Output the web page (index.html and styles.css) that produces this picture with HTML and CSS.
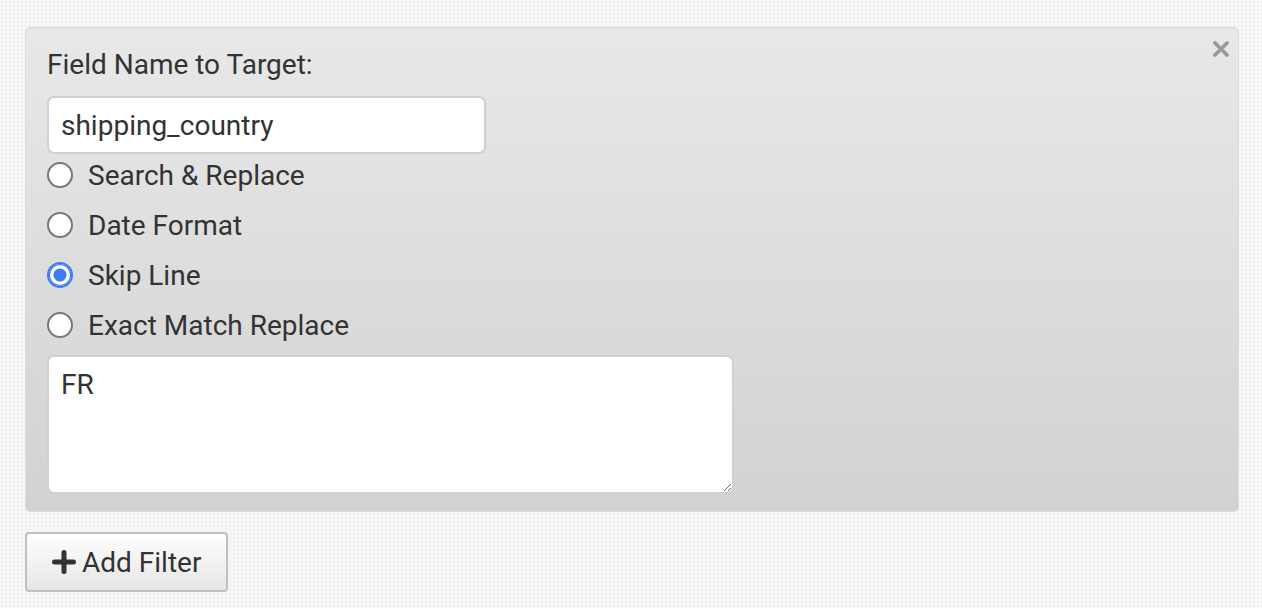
FILE: index.html
```html
<!DOCTYPE html>
<html lang="en">
<head>
<meta charset="UTF-8">
<meta name="viewport" content="width=device-width, initial-scale=1.0">
<title>Filters</title>
<link rel="stylesheet" href="styles.css">
</head>
<body>

<div class="page">

  <!-- one filter -->
  <div class="filter">
    <a class="close" href="#" title="Remove">
      <svg width="16" height="16" viewBox="0 0 16 16"><path d="M2 2 L14 14 M14 2 L2 14" stroke="#9a9a9a" stroke-width="3.8" stroke-linecap="round"/></svg>
    </a>

    <label class="field-label" for="field">Field Name to Target:</label>
    <input class="field-input" id="field" type="text" value="shipping_country">

    <label class="option"><input type="radio" name="mode"> Search &amp; Replace</label>
    <label class="option"><input type="radio" name="mode"> Date Format</label>
    <label class="option"><input type="radio" name="mode" checked> Skip Line</label>
    <label class="option"><input type="radio" name="mode"> Exact Match Replace</label>

    <textarea class="field-text">FR</textarea>
  </div>

  <button class="add-btn" type="button">
    <svg width="24" height="24" viewBox="0 0 24 24"><path d="M12 2.5 V21.5 M2.5 12 H21.5" stroke="#333" stroke-width="5" stroke-linecap="round"/></svg>
    Add Filter
  </button>

</div>

</body>
</html>
```

FILE: styles.css
```css
body {
  margin: 0;
  background-color: #f7f7f7;
  background-image: radial-gradient(#eeeeee 1px, transparent 1px);
  background-size: 4px 4px;
  font-family: Roboto, "Liberation Sans", sans-serif;
  color: #333;
}

.page {
  padding: 27px 23px 0 25px;
}

.filter {
  position: relative;
  display: flex;
  flex-direction: column;
  align-items: flex-start;
  padding: 19px 22px 17px 21px;
  border: 1px solid #dadada;
  border-radius: 5px;
  background: linear-gradient(#e8e8e8, #d2d2d2);
}

.close {
  position: absolute;
  top: 13px;
  right: 9px;
  line-height: 0;
}

.field-label {
  font-size: 28px;
  line-height: 36px;
  margin-bottom: 13px;
}

.field-input {
  box-sizing: border-box;
  width: 439px;
  height: 58px;
  padding: 0 12px;
  border: 2px solid #d0d0d0;
  border-radius: 7px;
  background: #fff;
  font-family: inherit;
  font-size: 28px;
  color: #333;
  outline: none;
}

.option {
  display: flex;
  align-items: center;
  gap: 15px;
  height: 42px;
  margin-top: 8px;
  font-size: 28px;
}

.field-input + .option {
  margin-top: 0;
}

.option input {
  appearance: none;
  margin: 0;
  width: 26px;
  height: 26px;
  border: 2px solid #777;
  border-radius: 50%;
  background: #fff;
}

.option input:checked {
  border-color: #3d7cf5;
  background: radial-gradient(#3d7cf5 0 6px, #fff 7px);
  box-shadow: inset 0 0 0 1px #3d7cf5;
}

.field-text {
  box-sizing: border-box;
  width: 687px;
  height: 139px;
  margin-top: 9px;
  padding: 11px 12px;
  border: 2px solid #d0d0d0;
  border-radius: 7px;
  background: #fff;
  font-family: inherit;
  font-size: 28px;
  color: #333;
  outline: none;
}

.add-btn {
  display: flex;
  align-items: center;
  gap: 6px;
  box-sizing: border-box;
  width: 203px;
  height: 60px;
  margin-top: 20px;
  padding: 0 0 0 25px;
  border: 2px solid #bfbfbf;
  border-radius: 4px;
  background: linear-gradient(#fefefe, #e6e6e6);
  font-family: inherit;
  font-size: 28px;
  color: #333;
}
```
